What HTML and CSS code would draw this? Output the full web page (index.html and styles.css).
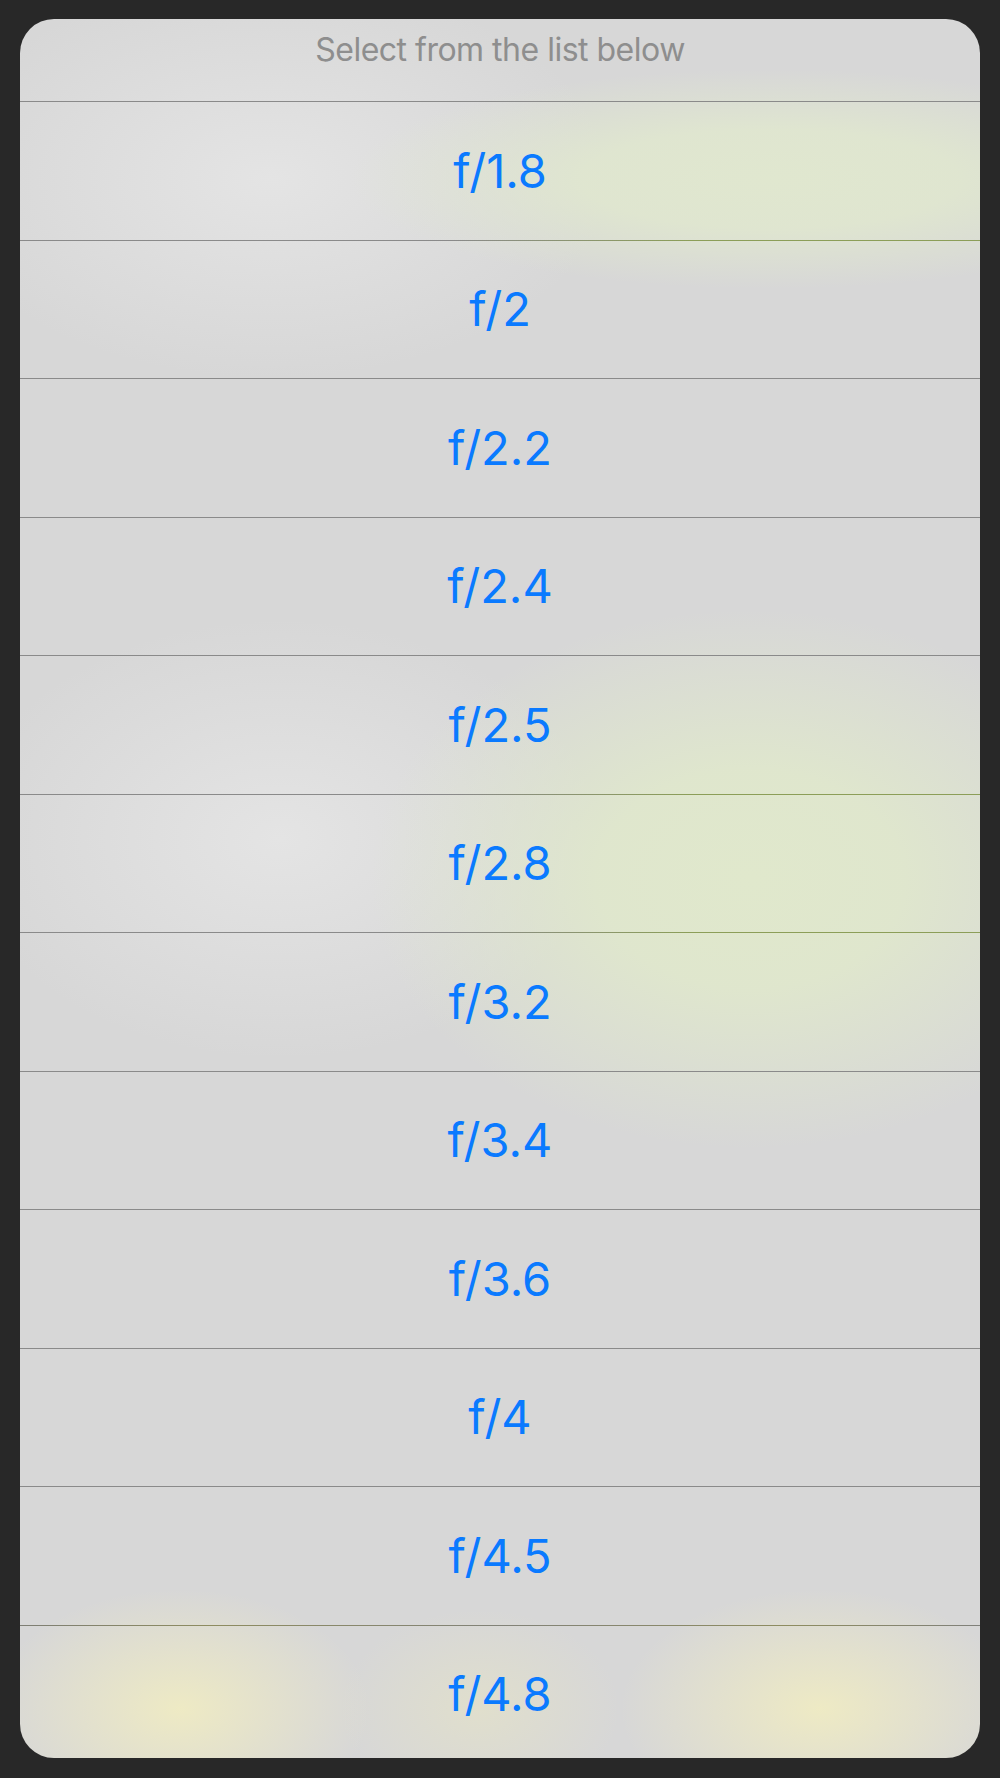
FILE: index.html
```html
<!DOCTYPE html>
<html lang="en">
<head>
<meta charset="utf-8">
<title>Select aperture</title>
<link rel="stylesheet" href="styles.css">
</head>
<body>
<div class="sheet">
  <div class="header">Select from the list below</div>
  <div class="row">f/1.8</div>
  <div class="row tint">f/2</div>
  <div class="row">f/2.2</div>
  <div class="row">f/2.4</div>
  <div class="row">f/2.5</div>
  <div class="row tint">f/2.8</div>
  <div class="row tint">f/3.2</div>
  <div class="row">f/3.4</div>
  <div class="row">f/3.6</div>
  <div class="row">f/4</div>
  <div class="row">f/4.5</div>
  <div class="row warm">f/4.8</div>
</div>
</body>
</html>
```
FILE: styles.css
```css
html, body {
  margin: 0;
  padding: 0;
}
body {
  background: #282828;
  width: 1000px;
  height: 1778px;
  overflow: hidden;
  font-family: Inter, "Noto Sans", "Liberation Sans", sans-serif;
}
.sheet {
  margin: 19px 20px 0 20px;
  width: 960px;
  height: 1739px;
  border-radius: 34px;
  overflow: hidden;
  display: flex;
  flex-direction: column;
  background:
    radial-gradient(ellipse 190px 120px at 160px 1690px, rgba(238,234,196,1) 0%, rgba(238,234,196,0) 100%),
    radial-gradient(ellipse 200px 120px at 800px 1690px, rgba(238,234,196,1) 0%, rgba(238,234,196,0) 100%),
    radial-gradient(ellipse 140px 100px at 460px 1690px, rgba(228,226,200,0.7) 0%, rgba(228,226,200,0) 100%),
    radial-gradient(ellipse 420px 110px at 750px 160px, rgba(224,231,207,1) 0%, rgba(224,231,207,0.9) 45%, rgba(224,231,207,0) 100%),
    radial-gradient(ellipse 380px 270px at 730px 860px, rgba(224,232,204,1) 0%, rgba(224,232,204,0.9) 40%, rgba(224,232,204,0) 100%),
    radial-gradient(ellipse 340px 200px at 250px 160px, rgba(228,228,228,1) 0%, rgba(228,228,228,0) 100%),
    radial-gradient(ellipse 320px 220px at 260px 820px, rgba(228,228,228,1) 0%, rgba(228,228,228,0) 100%),
    #d7d7d7;
}
.header {
  flex: 0 0 auto;
  height: 82px;
  box-sizing: border-box;
  padding-top: 11px;
  line-height: 40px;
  font-size: 32px;
  letter-spacing: -0.5px;
  color: #8e8e8e;
  text-align: center;
}
.row {
  flex: 0 0 auto;
  position: relative;
  height: 138.5px;
  box-sizing: border-box;
  display: flex;
  align-items: center;
  justify-content: center;
  font-size: 47px;
  color: #0a7aff;
}
.row::before {
  content: "";
  position: absolute;
  left: 0;
  right: 0;
  top: 0;
  height: 1px;
  background: #8a8a8a;
}
.row.tint::before {
  background: linear-gradient(to right, #8a8a8a 0%, #8a8a8a 45%, #8c9e58 70%, #8c9e58 100%);
}
.row.warm::before {
  background: linear-gradient(to right, #7e7e74 0%, #8e8c60 20%, #828278 50%, #8e8c60 80%, #80807a 100%);
}
```
